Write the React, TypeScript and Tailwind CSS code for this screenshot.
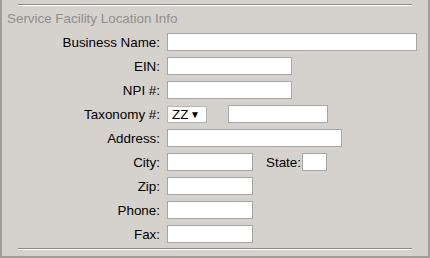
const FONT = { fontFamily: '"Liberation Sans", Arial, sans-serif' };

function Field({ w }: { w: string }) {
  return <div className={`h-[18px] ${w} bg-white border border-[#a6a6a6]`} />;
}

function Row({ label, children }: { label: string; children: React.ReactNode }) {
  return (
    <div className="flex items-center h-[18px]">
      <div className="w-[158px] text-right text-[13.4px] leading-[15px] text-black">{label}</div>
      <div className="ml-[7px] flex items-center">{children}</div>
    </div>
  );
}

function Rule() {
  return <div className="mx-[16px] h-[2px] border-t border-[#8a8a8a] border-b border-b-white" />;
}

export default function App() {
  return (
    <div
      style={FONT}
      className="w-[430px] h-[258px] bg-[#d5d2cd] border-l-2 border-r-2 border-b-2 border-[#a09d99] pt-[4px] box-border"
    >
      <Rule />
      <div className="mt-[5px] ml-[5px] h-[15px] text-[13.4px] leading-[15px] text-[#8e8e8e]">
        Service Facility Location Info
      </div>

      <div className="mt-[7px] flex flex-col gap-[6px]">
        <Row label="Business Name:">
          <Field w="w-[250px]" />
        </Row>
        <Row label="EIN:">
          <Field w="w-[125px]" />
        </Row>
        <Row label="NPI #:">
          <Field w="w-[125px]" />
        </Row>
        <Row label="Taxonomy #:">
          <div className="h-[17px] w-[40px] bg-white border border-[#b4b4b4] flex items-center justify-between pl-[4px] pr-[6px] text-[13.4px] leading-[15px] text-black">
            <span>ZZ</span>
            <span className="text-[10px]">▼</span>
          </div>
          <div className="ml-[21px]">
            <Field w="w-[100px]" />
          </div>
        </Row>
        <Row label="Address:">
          <Field w="w-[175px]" />
        </Row>
        <Row label="City:">
          <Field w="w-[86px]" />
          <span className="ml-[13px] mr-[1px] text-[13.4px] leading-[15px] text-black">State:</span>
          <Field w="w-[25px]" />
        </Row>
        <Row label="Zip:">
          <Field w="w-[86px]" />
        </Row>
        <Row label="Phone:">
          <Field w="w-[86px]" />
        </Row>
        <Row label="Fax:">
          <Field w="w-[86px]" />
        </Row>
      </div>

      <div className="mt-[5px]">
        <Rule />
      </div>
    </div>
  );
}
